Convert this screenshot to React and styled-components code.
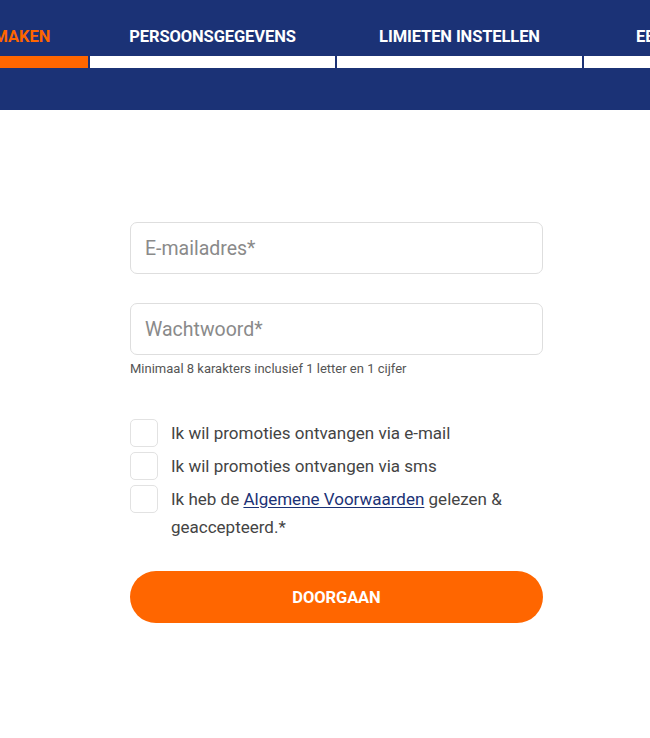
import React from "react";
import styled, { createGlobalStyle } from "styled-components";

const GlobalStyle = createGlobalStyle`
  html, body { margin: 0; padding: 0; background: #ffffff; }
  body { font-family: Roboto, "Noto Sans", sans-serif; overflow: hidden; }
  * { box-sizing: border-box; }
`;

const Page = styled.div`
  width: 650px;
  min-height: 738px;
  background: #fff;
  overflow: hidden;
`;

const Header = styled.header`
  background: #1b3276;
  height: 110px;
  overflow: hidden;
`;

const Steps = styled.nav`
  display: flex;
  gap: 2px;
  margin-left: -157px;
  padding-top: 28px;
`;

const Step = styled.div`
  flex: 0 0 245px;
  display: flex;
  flex-direction: column;
  align-items: center;
  gap: 10px;
`;

const StepLabel = styled.span`
  font-family: Roboto, sans-serif;
  font-weight: 700;
  font-size: 16.5px;
  line-height: 18px;
  letter-spacing: -0.1px;
  color: ${(p) => (p.$active ? "#ff6600" : "#ffffff")};
  white-space: nowrap;
`;

const StepBar = styled.div`
  align-self: stretch;
  height: 12px;
  background: ${(p) => (p.$active ? "#ff6600" : "#ffffff")};
`;

const Form = styled.form`
  width: 413px;
  margin: 112px 0 0 130px;
  display: flex;
  flex-direction: column;
`;

const Input = styled.input`
  width: 100%;
  height: 52px;
  border: 1px solid #dedede;
  border-radius: 7px;
  padding: 0 14px;
  font-family: Roboto, sans-serif;
  font-size: 19.5px;
  color: #333;
  outline: none;
  &::placeholder { color: #8a8a8a; }
`;

const FieldGap = styled.div`
  height: 29px;
`;

const Hint = styled.p`
  margin: 6px 0 0 0;
  font-family: Roboto, sans-serif;
  font-size: 13px;
  line-height: 16px;
  color: #555;
`;

const Checks = styled.div`
  margin-top: 42px;
  display: flex;
  flex-direction: column;
  gap: 5px;
`;

const CheckRow = styled.label`
  display: flex;
  align-items: flex-start;
  gap: 13px;
`;

const Box = styled.span`
  flex: 0 0 28px;
  width: 28px;
  height: 28px;
  border: 1px solid #e2e2e2;
  border-radius: 5px;
  background: #fff;
`;

const CheckText = styled.span`
  font-family: Roboto, sans-serif;
  font-size: 17px;
  line-height: 28px;
  color: #444;
`;

const Link = styled.a`
  color: #1b3276;
  text-decoration: underline;
  text-underline-offset: 2px;
`;

const Button = styled.button`
  margin-top: 30px;
  height: 52px;
  width: 100%;
  border: none;
  border-radius: 26px;
  background: #ff6600;
  color: #fff;
  font-family: Roboto, sans-serif;
  font-weight: 700;
  font-size: 16.5px;
  letter-spacing: -0.1px;
`;

const steps = [
  { label: "ACCOUNT AANMAKEN", active: true },
  { label: "PERSOONSGEGEVENS" },
  { label: "LIMIETEN INSTELLEN" },
  { label: "EERSTE STORTING" },
];

export default function App() {
  return (
    <Page>
      <GlobalStyle />
      <Header>
        <Steps>
          {steps.map((s) => (
            <Step key={s.label}>
              <StepLabel $active={s.active}>{s.label}</StepLabel>
              <StepBar $active={s.active} />
            </Step>
          ))}
        </Steps>
      </Header>
      <Form onSubmit={(e) => e.preventDefault()}>
        <Input type="email" placeholder="E-mailadres*" />
        <FieldGap />
        <Input type="password" placeholder="Wachtwoord*" />
        <Hint>Minimaal 8 karakters inclusief 1 letter en 1 cijfer</Hint>
        <Checks>
          <CheckRow>
            <Box />
            <CheckText>Ik wil promoties ontvangen via e-mail</CheckText>
          </CheckRow>
          <CheckRow>
            <Box />
            <CheckText>Ik wil promoties ontvangen via sms</CheckText>
          </CheckRow>
          <CheckRow>
            <Box />
            <CheckText>
              Ik heb de <Link href="#">Algemene Voorwaarden</Link> gelezen &amp;
              geaccepteerd.*
            </CheckText>
          </CheckRow>
        </Checks>
        <Button type="submit">DOORGAAN</Button>
      </Form>
    </Page>
  );
}
